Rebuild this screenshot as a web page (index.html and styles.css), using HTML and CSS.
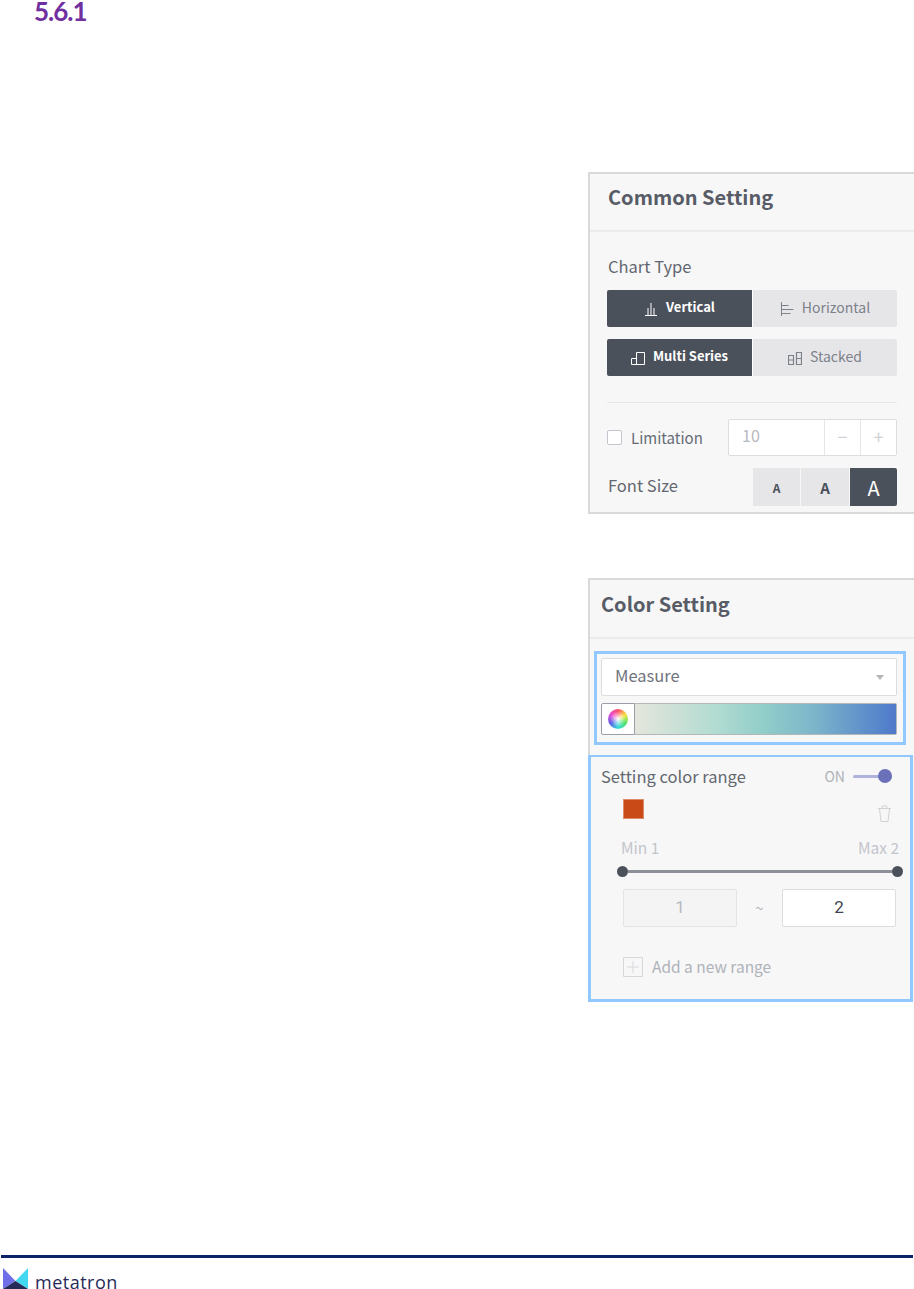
FILE: index.html
```html
<!DOCTYPE html>
<html lang="en">
<head>
  <meta charset="UTF-8">
  <meta name="viewport" content="width=device-width, initial-scale=1.0">
  <title>5.6.1</title>
  <link rel="stylesheet" href="styles.css">
</head>
<body>
  <h4 class="section-no">5.6.1</h4>

  <div class="panel common-panel">
    <div class="panel-head">Common Setting</div>
    <div class="panel-body">
      <div class="field-label">Chart Type</div>
      <div class="toggle-row">
        <div class="toggle on">
          <svg class="ico" viewBox="0 0 14 14"><path d="M1 13.500h12M4 13V6M7 13V1M10 13V6" fill="none" stroke="currentColor"/></svg>
          Vertical
        </div>
        <div class="toggle">
          <svg class="ico" viewBox="0 0 14 14"><path d="M1.500 0v14M1.500 3.500h7M1.500 7.500h12M1.500 11.500h9" fill="none" stroke="currentColor"/></svg>
          Horizontal
        </div>
      </div>
      <div class="toggle-row">
        <div class="toggle on">
          <svg class="ico" viewBox="0 0 14 14"><path d="M.5 13.500v-6h5v6zM5.500 13.500V1.500h8v12z" fill="none" stroke="currentColor"/></svg>
          Multi Series
        </div>
        <div class="toggle">
          <svg class="ico" viewBox="0 0 14 14"><path d="M.5 13.500v-9h5v9zM.5 9h5M8.500 13.500V1.500h5v12zM8.500 7.500h5" fill="none" stroke="currentColor" stroke-width="1.200"/></svg>
          Stacked
        </div>
      </div>
      <div class="divider"></div>
      <div class="limit-row">
        <label class="check"><span class="check-box"></span>Limitation</label>
        <div class="stepper">
          <span class="stepper-val">10</span>
          <span class="stepper-btn">&minus;</span>
          <span class="stepper-btn">+</span>
        </div>
      </div>
      <div class="font-row">
        <div class="field-label">Font Size</div>
        <div class="font-btns">
          <span class="font-btn small">A</span>
          <span class="font-btn mid">A</span>
          <span class="font-btn large on">A</span>
        </div>
      </div>
    </div>
  </div>

  <div class="panel color-panel">
    <div class="panel-head">Color Setting</div>
    <div class="color-box">
      <div class="select">Measure<span class="caret"></span></div>
      <div class="palette">
        <span class="wheel-btn"><span class="wheel"></span></span>
        <span class="ramp"></span>
      </div>
    </div>
    <div class="range-box">
      <div class="range-head">
        <span class="range-title">Setting color range</span>
        <span class="switch-label">ON</span>
        <span class="switch"><span class="knob"></span></span>
      </div>
      <div class="swatch-row">
        <span class="swatch"></span>
        <svg class="trash" viewBox="0 0 15 17"><path d="M1 3.500h13M5 3.500l.5-2.500h4l.5 2.500M2.500 3.500l1.500 13h7l1.500-13" fill="none" stroke="currentColor"/></svg>
      </div>
      <div class="minmax"><span>Min 1</span><span>Max 2</span></div>
      <div class="slider"><span class="dot"></span><span class="track"></span><span class="dot"></span></div>
      <div class="range-inputs">
        <span class="num-input off">1</span>
        <span class="tilde">~</span>
        <span class="num-input">2</span>
      </div>
      <div class="add-range">
        <svg class="add-ico" viewBox="0 0 20 20"><path d="M.5.500h19v19H.5zM4 10h12M10 4v12" fill="none" stroke="currentColor"/></svg>
        <span class="add-text">Add a new range</span>
      </div>
    </div>
  </div>

  <div class="footer">
    <div class="footer-line"></div>
    <div class="brand">
      <svg class="brand-mark" viewBox="0 0 25 21">
        <path d="M0 0l12.500 13L0 21z" fill="#6f6fe8"/>
        <path d="M25 0L12.500 13 25 21z" fill="#44d7f0"/>
        <path d="M0 21l12.500-8L25 21z" fill="#262a58"/>
      </svg>
      <span class="brand-name">metatron</span>
    </div>
  </div>
</body>
</html>
```

FILE: styles.css
```css
html, body {
  height: 100%;
}

body {
  margin: 0;
  height: 1289px;
  overflow: hidden;
  background: #fff;
  display: flex;
  flex-direction: column;
  font-family: 'Noto Sans CJK KR', 'Noto Sans', sans-serif;
  color: #4b515b;
}

.section-no {
  margin: 0 0 0 34px;
  font-family: Lato, 'Open Sans', sans-serif;
  font-size: 26px;
  font-weight: 700;
  line-height: 22px;
  letter-spacing: -1px;
  color: #7030a0;
}

.panel {
  box-sizing: border-box;
  width: 326px;
  margin-left: 588px;
  background: #f7f7f8;
  border: 2px solid #d9d9d9;
  border-right: 0;
}

.common-panel {
  height: 342px;
  margin-top: 150px;
}

.color-panel {
  height: 424px;
  margin-top: 64px;
  border-bottom: 0;
}

.panel-head {
  font-size: 20px;
  font-weight: 700;
  color: #575c66;
  border-bottom: 2px solid #ececec;
}

.common-panel .panel-head {
  height: 56px;
  line-height: 46px;
  padding-left: 18px;
}

.color-panel .panel-head {
  height: 57px;
  line-height: 47px;
  padding-left: 11px;
}

.panel-body {
  padding: 22px 17px 0 17px;
}

.field-label {
  padding-left: 1px;
  font-size: 16.500px;
  line-height: 24px;
  color: #63676f;
}

.toggle-row {
  display: flex;
  height: 37px;
  margin-top: 12px;
}

.toggle {
  flex: 1;
  display: flex;
  align-items: center;
  justify-content: center;
  gap: 8px;
  padding-bottom: 3px;
  box-sizing: border-box;
  background: #e6e6e9;
  font-size: 14px;
  line-height: 20px;
  color: #7d818a;
  border-radius: 0 2px 2px 0;
}

.toggle.on {
  flex: 0 0 146px;
  background: #4b515b;
  color: #fff;
  font-size: 13px;
  font-weight: 700;
  border-right: 1px solid #fff;
  border-radius: 2px 0 0 2px;
}

.ico {
  width: 14px;
  height: 14px;
  margin-top: 3px;
}

.divider {
  height: 1px;
  margin-top: 26px;
  background: #e8e8ea;
}

.limit-row {
  display: flex;
  align-items: center;
  justify-content: space-between;
  height: 37px;
  margin-top: 16px;
}

.check {
  display: flex;
  align-items: center;
  font-size: 15px;
  line-height: 20px;
  color: #666b75;
}

.check-box {
  box-sizing: border-box;
  width: 15px;
  height: 15px;
  margin-right: 9px;
  background: #fff;
  border: 1px solid #c4c6cd;
  border-radius: 2px;
}

.stepper {
  box-sizing: border-box;
  display: flex;
  width: 169px;
  height: 37px;
  background: #fff;
  border: 1px solid #dcdde1;
  border-radius: 2px;
  font-size: 16px;
  color: #b7b9c0;
}

.stepper-val {
  flex: 1;
  padding-left: 13px;
  line-height: 31px;
}

.stepper-btn {
  width: 35px;
  border-left: 1px solid #e6e6e9;
  text-align: center;
  font-size: 18px;
  line-height: 33px;
  color: #cfd1d6;
}

.font-row {
  display: flex;
  align-items: center;
  justify-content: space-between;
  margin-top: 12px;
  height: 38px;
}

.font-row .field-label {
  margin-top: -4px;
}

.font-btns {
  display: flex;
  gap: 1px;
}

.font-btn {
  width: 47px;
  height: 38px;
  background: #e6e6e9;
  display: flex;
  align-items: center;
  justify-content: center;
  color: #4b515b;
  font-weight: 700;
}

.font-btn.small { font-size: 12px; }

.font-btn.mid {
  width: 48px;
  font-size: 15px;
}

.font-btn.large {
  font-size: 20px;
  font-weight: 400;
}

.font-btn.on {
  background: #4b515b;
  color: #fff;
  border-radius: 0 2px 2px 0;
}

.color-box {
  box-sizing: border-box;
  width: 312px;
  height: 94px;
  margin: 12px 0 10px 4px;
  padding: 4px 6px 0 4px;
  border: 3px solid #90c8ff;
}

.select {
  box-sizing: border-box;
  position: relative;
  height: 38px;
  padding-left: 13px;
  background: #fff;
  border: 1px solid #dcdde1;
  border-radius: 2px;
  font-size: 16.500px;
  line-height: 33px;
  color: #6f737c;
}

.caret {
  position: absolute;
  right: 12px;
  top: 16px;
  border: 4px solid transparent;
  border-top: 5px solid #b5b7bd;
  border-bottom: 0;
}

.palette {
  display: flex;
  height: 32px;
  margin-top: 7px;
}

.wheel-btn {
  box-sizing: border-box;
  display: flex;
  align-items: center;
  justify-content: center;
  width: 34px;
  background: #fff;
  border: 1px solid #9a9ea6;
  border-radius: 2px 0 0 2px;
}

.wheel {
  width: 20px;
  height: 20px;
  border-radius: 50%;
  background:
    radial-gradient(circle, #fff 0, rgba(255, 255, 255, 0) 55%),
    conic-gradient(#ff4f6a, #f6e23c, #4fe36b, #3cdcdc, #5a60e8, #e84cd8, #ff4f6a);
}

.ramp {
  box-sizing: border-box;
  flex: 1;
  background: linear-gradient(90deg, #e4e6dc 0%, #b3dcd2 30%, #90cdc9 50%, #7db6ca 68%, #5583cb 95%, #5179c9 100%);
  border: 1px solid #b2b8ba;
  border-left: 0;
  border-radius: 0 2px 2px 0;
}

.range-box {
  box-sizing: border-box;
  width: 325px;
  height: 247px;
  margin-left: -2px;
  padding: 0 14px 0 10px;
  border: 3px solid #90c8ff;
  border-top-width: 2px;
}

.range-head {
  display: flex;
  align-items: center;
  height: 38px;
  padding-bottom: 2px;
  font-size: 16.500px;
  line-height: 20px;
  color: #63676f;
}

.range-title {
  flex: 1;
}

.switch-label {
  margin-right: 8px;
  font-size: 14px;
  color: #b0b2b9;
}

.switch {
  position: relative;
  display: block;
  width: 39px;
  height: 3px;
  margin-right: 4px;
  background: #aeb2dc;
  border-radius: 2px;
}

.knob {
  position: absolute;
  right: 0;
  top: -6px;
  width: 14px;
  height: 14px;
  border-radius: 50%;
  background: #6a71b8;
}

.swatch-row {
  display: flex;
  justify-content: space-between;
  align-items: flex-start;
  box-sizing: border-box;
  height: 40px;
  padding: 2px 0 0 22px;
}

.swatch {
  width: 21px;
  height: 20px;
  background: #c94a16;
  border: 1px solid #de8a66;
  box-sizing: border-box;
}

.trash {
  width: 15px;
  height: 17px;
  margin: 6px 4px 0 0;
  color: #cfd1d5;
}

.minmax {
  display: flex;
  justify-content: space-between;
  margin: 0 -3px 0 20px;
  font-size: 15.500px;
  line-height: 20px;
  color: #c3c5cb;
}

.slider {
  display: flex;
  align-items: center;
  margin: 9px -7px 0 16px;
}

.dot {
  width: 11px;
  height: 11px;
  border-radius: 50%;
  background: #4b515b;
}

.track {
  flex: 1;
  height: 3px;
  background: #8a8f98;
}

.range-inputs {
  display: flex;
  align-items: center;
  margin: 12px 0 0 22px;
}

.num-input {
  box-sizing: border-box;
  width: 114px;
  height: 38px;
  background: #fff;
  border: 1px solid #dcdde1;
  border-radius: 2px;
  text-align: center;
  font-family: Roboto, 'Liberation Sans', sans-serif;
  font-size: 17px;
  line-height: 34px;
  color: #3f4550;
}

.num-input.off {
  background: #f4f4f5;
  border-color: #e4e4e7;
  color: #b7b9c0;
}

.tilde {
  width: 45px;
  text-align: center;
  font-size: 14px;
  line-height: 20px;
  color: #b0b2b9;
}

.add-range {
  display: flex;
  align-items: flex-start;
  gap: 9px;
  margin: 30px 0 0 22px;
  font-size: 15.500px;
  line-height: 18px;
  color: #b0b2b9;
}

.add-ico {
  width: 20px;
  height: 20px;
  flex: none;
  color: #d6d7db;
}

.footer {
  margin-top: auto;
  height: 34px;
}

.footer-line {
  height: 3px;
  margin: 0 1px;
  background: #0b2265;
}

.brand {
  display: flex;
  align-items: flex-end;
  margin: 10px 0 0 3px;
}

.brand-mark {
  width: 25px;
  height: 21px;
  flex: none;
}

.brand-name {
  margin-left: 7px;
  font-family: 'Open Sans', sans-serif;
  font-size: 18px;
  line-height: 14px;
  letter-spacing: 0.5px;
  color: #262a58;
}
```
